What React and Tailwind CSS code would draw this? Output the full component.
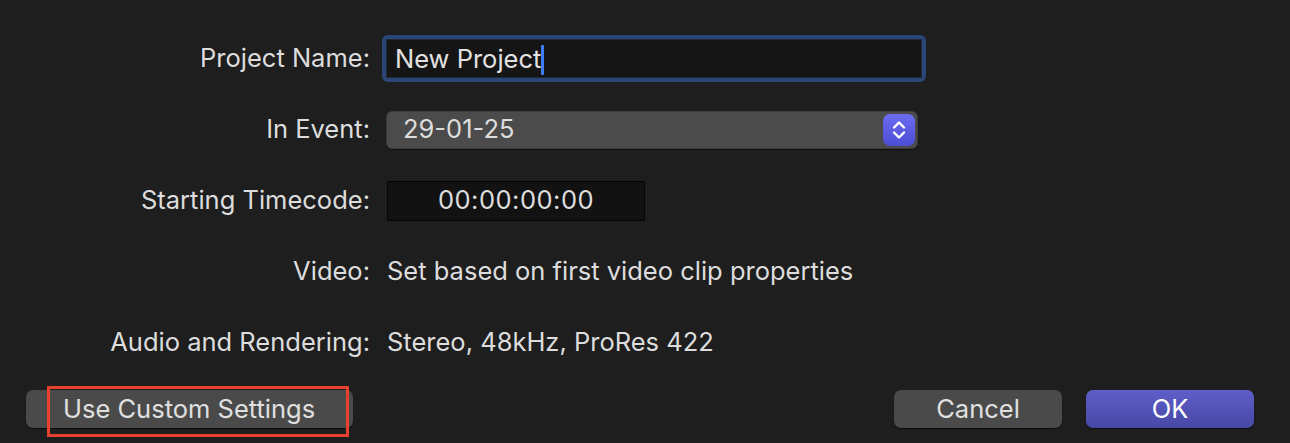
import { useState } from "react";

function Row({ label, children }) {
  return (
    <div className="flex h-[71px] items-center">
      <div className="w-[371px] shrink-0 text-right pr-[1px]">{label}</div>
      <div className="flex-1 flex items-center">{children}</div>
    </div>
  );
}

function Stepper() {
  return (
    <div className="w-[32px] h-[32px] rounded-[7px] bg-gradient-to-b from-[#6c6cf2] to-[#4d4dd4] flex items-center justify-center">
      <svg width="18" height="24" viewBox="0 0 18 24" fill="none" stroke="white" strokeWidth="2.4" strokeLinecap="round" strokeLinejoin="round">
        <path d="M4 9.5 L9 4.5 L14 9.5" />
        <path d="M4 14.5 L9 19.5 L14 14.5" />
      </svg>
    </div>
  );
}

export default function App() {
  const [name] = useState("New Project");

  return (
    <div
      className="w-[1290px] h-[443px] bg-[#1e1e1e] text-[#dddddd] text-[25.5px] overflow-hidden"
      style={{ fontFamily: "Inter, 'Liberation Sans', sans-serif" }}
    >
      <div className="pt-[23px]">
        {/* Project name */}
        <Row label="Project Name:">
          <div className="ml-[11px] w-[544px] h-[47px] rounded-[6px] bg-[#2a4677] p-[4px]">
            <div className="h-full bg-[#151515] border border-[#242a35] flex items-center pl-[8px] pt-[2px]">
              <span className="text-[#e2e2e2]">{name}</span>
              <span className="w-[3px] h-[30px] bg-[#3b7cf7] rounded-[1px]" />
            </div>
          </div>
        </Row>

        {/* Event popup */}
        <Row label="In Event:">
          <div className="ml-[15px] w-[532px] h-[38px] rounded-[6px] bg-[#4b4b4b] border border-[#3a3a3a] shadow-[0_1px_1px_rgba(0,0,0,0.5)] flex items-center justify-between pl-[16px] pr-[2px]">
            <span>29-01-25</span>
            <Stepper />
          </div>
        </Row>

        {/* Timecode */}
        <Row label="Starting Timecode:">
          <div className="ml-[16px] w-[258px] h-[40px] bg-[#121212] border border-[#050505] flex items-center justify-center">
            <span className="tracking-[0.5px]">00:00:00:00</span>
          </div>
        </Row>

        <Row label="Video:">
          <span className="ml-[16px]">Set based on first video clip properties</span>
        </Row>

        <Row label="Audio and Rendering:">
          <span className="ml-[16px]">Stereo, 48kHz, ProRes 422</span>
        </Row>
      </div>

      {/* Buttons */}
      <div className="mt-[12px] flex items-center pl-[26px] pr-[36px]">
        <div className="relative">
          <button className="w-[327px] h-[38px] rounded-[7px] bg-[#4a4a4a] shadow-[0_1px_1px_rgba(0,0,0,0.6)] text-left pl-[37px] text-[#e0e0e0]">
            Use Custom Settings
          </button>
          <div className="absolute left-[21px] top-[-4px] w-[302px] h-[51px] border-[3px] border-[#e5412c] pointer-events-none" />
        </div>
        <div className="flex-1" />
        <button className="w-[168px] h-[38px] rounded-[7px] bg-[#4a4a4a] shadow-[0_1px_1px_rgba(0,0,0,0.6)] text-[#e0e0e0]">
          Cancel
        </button>
        <button className="ml-[24px] w-[168px] h-[38px] rounded-[7px] bg-gradient-to-b from-[#5e5ec8] to-[#4848a6] shadow-[0_1px_1px_rgba(0,0,0,0.6)] text-white">
          OK
        </button>
      </div>
    </div>
  );
}
